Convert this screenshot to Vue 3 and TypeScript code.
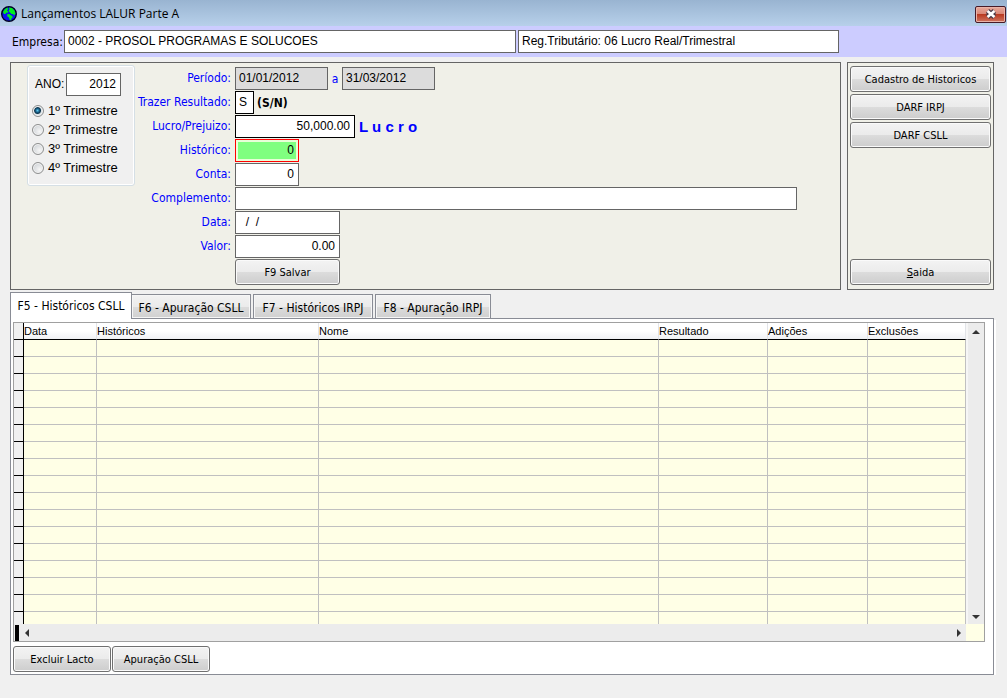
<script setup lang="ts">
import { ref } from 'vue'

interface Column {
  key: string
  title: string
}

const company = ref('0002 - PROSOL PROGRAMAS E SOLUCOES')
const taxRegime = ref('Reg.Tributário: 06 Lucro Real/Trimestral')
const year = ref('2012')
const quarter = ref(1)
const periodStart = ref('01/01/2012')
const periodEnd = ref('31/03/2012')
const fetchResult = ref('S')
const profit = ref('50,000.00')
const history = ref('0')
const account = ref('0')
const complement = ref('')
const entryDate = ref('  /  /')
const amount = ref('0.00')

const quarters = [1, 2, 3, 4]
const tabs = ['F5 - Históricos CSLL', 'F6 - Apuração CSLL', 'F7 - Históricos IRPJ', 'F8 - Apuração IRPJ']
const activeTab = ref(0)

const columns: Column[] = [
  { key: 'data', title: 'Data' },
  { key: 'historicos', title: 'Históricos' },
  { key: 'nome', title: 'Nome' },
  { key: 'resultado', title: 'Resultado' },
  { key: 'adicoes', title: 'Adições' },
  { key: 'exclusoes', title: 'Exclusões' },
]
const rowCount = 17
</script>

<template>
  <div class="window">
    <header class="titlebar">
      <svg class="globe" viewBox="0 0 16 16" aria-hidden="true">
        <circle cx="8" cy="8" r="7.3" fill="#0a14f0" stroke="#000020" stroke-width="1.400" />
        <path d="M2 6L4 3L6.500 1.500L7 3L6 4.500L7.500 6L6 7L5 6.500L4.500 8L3 8Z" fill="#00f01c" />
        <path d="M8 1.500L11 2L13.500 4.500L14.500 7.500L13 9.500L12 8L10.500 8L9 6.500L7.500 5L8.500 3.500Z" fill="#00f01c" />
        <path d="M6 8.500L8 8L10.500 9.500L12 11L10.500 12.500L10 14.500L8.500 13.500L8 11.500L6.500 10.500Z" fill="#00f01c" />
      </svg>
      <h1>Lançamentos LALUR Parte A</h1>
      <button class="close" type="button" aria-label="Fechar">
        <svg viewBox="0 0 12 10" aria-hidden="true">
          <path d="M2.500 2L9.500 8M9.500 2L2.500 8" stroke="#4a3a48" stroke-width="5" />
          <path d="M2.500 2L9.500 8M9.500 2L2.500 8" stroke="#fff" stroke-width="2.600" />
        </svg>
      </button>
    </header>

    <div class="company-bar">
      <label for="company">Empresa:</label>
      <input id="company" v-model="company" class="field company" type="text" />
      <input v-model="taxRegime" class="field regime" type="text" aria-label="Regime tributário" />
    </div>

    <main class="content">
      <div class="top">
        <section class="panel entry">
          <div class="period-box">
            <div class="year">
              <label for="year">ANO:</label>
              <input id="year" v-model="year" class="field num" type="text" />
            </div>
            <label v-for="q in quarters" :key="q" class="quarter">
              <input v-model="quarter" type="radio" name="quarter" :value="q" />
              <span>{{ q }}º Trimestre</span>
            </label>
          </div>

          <form class="form" @submit.prevent>
            <label for="start">Período:</label>
            <div class="cell">
              <input id="start" v-model="periodStart" class="field date" type="text" disabled />
              <label class="until" for="end">a</label>
              <input id="end" v-model="periodEnd" class="field date" type="text" disabled />
            </div>
            <label for="fetch">Trazer Resultado:</label>
            <div class="cell">
              <input id="fetch" v-model="fetchResult" class="field dark flag" type="text" maxlength="1" />
              <b class="hint">(S/N)</b>
            </div>
            <label for="profit">Lucro/Prejuizo:</label>
            <div class="cell">
              <input id="profit" v-model="profit" class="field dark num profit" type="text" />
              <b class="outcome">L u c r o</b>
            </div>
            <label for="history">Histórico:</label>
            <div class="cell"><input id="history" v-model="history" class="field num code current" type="text" /></div>
            <label for="account">Conta:</label>
            <div class="cell"><input id="account" v-model="account" class="field num code" type="text" /></div>
            <label for="complement">Complemento:</label>
            <div class="cell"><input id="complement" v-model="complement" class="field long" type="text" /></div>
            <label for="date">Data:</label>
            <div class="cell"><input id="date" v-model="entryDate" class="field medium" type="text" /></div>
            <label for="amount">Valor:</label>
            <div class="cell"><input id="amount" v-model="amount" class="field num medium" type="text" /></div>
            <button class="btn save" type="submit">F9 Salvar</button>
          </form>
        </section>

        <nav class="panel actions">
          <button class="btn" type="button">Cadastro de Historicos</button>
          <button class="btn" type="button">DARF IRPJ</button>
          <button class="btn" type="button">DARF CSLL</button>
          <button class="btn exit" type="button"><span><u>S</u>aida</span></button>
        </nav>
      </div>

      <div class="tabs" role="tablist">
        <button
          v-for="(tab, i) in tabs"
          :key="tab"
          class="tab"
          :class="{ active: i === activeTab }"
          type="button"
          role="tab"
          :aria-selected="i === activeTab"
          @click="activeTab = i"
        >
          {{ tab }}
        </button>
      </div>

      <section class="page" role="tabpanel">
        <div class="grid">
          <div class="grid-main">
            <table>
              <colgroup>
                <col class="c-mark" />
                <col v-for="c in columns" :key="c.key" :class="'c-' + c.key" />
              </colgroup>
              <thead>
                <tr>
                  <td class="mark"></td>
                  <th v-for="c in columns" :key="c.key" scope="col">{{ c.title }}</th>
                </tr>
              </thead>
              <tbody>
                <tr v-for="r in rowCount" :key="r">
                  <td class="mark"></td>
                  <td v-for="c in columns" :key="c.key"></td>
                </tr>
              </tbody>
            </table>
          </div>
          <div class="scroll-v" aria-hidden="true">
            <svg viewBox="0 0 8 4"><path d="M0 4L4 0L8 4Z" fill="#333" /></svg>
            <svg viewBox="0 0 8 4"><path d="M0 0L4 4L8 0Z" fill="#333" /></svg>
          </div>
          <div class="scroll-h" aria-hidden="true">
            <i class="splitter"></i>
            <svg viewBox="0 0 4 8"><path d="M4 0L0 4L4 8Z" fill="#333" /></svg>
            <svg class="right" viewBox="0 0 4 8"><path d="M0 0L4 4L0 8Z" fill="#333" /></svg>
          </div>
        </div>
        <div class="page-actions">
          <button class="btn" type="button">Excluir Lacto</button>
          <button class="btn" type="button">Apuração CSLL</button>
        </div>
      </section>
    </main>
  </div>
</template>

<style>
body {
  margin: 0;
  background: #f0f0f0;
}
</style>

<style scoped>
.window {
  font: 12px/16px 'DejaVu Sans Condensed', 'DejaVu Sans', sans-serif;
  color: #000;
}
.window *,
.window *::before {
  box-sizing: border-box;
}
.titlebar {
  display: flex;
  align-items: center;
  gap: 4px;
  height: 26px;
  padding: 2px 1px 0;
  background: linear-gradient(#99b4d1, #b7d0ea);
}
.globe {
  width: 16px;
  height: 16px;
}
h1 {
  flex: 1;
  margin: 0;
  font: 12px/16px 'Open Sans', 'Noto Sans', sans-serif;
}
.close {
  display: flex;
  align-items: center;
  justify-content: center;
  width: 31px;
  height: 17px;
  padding: 0;
  border: 1px solid #471a27;
  border-radius: 2px;
  background: linear-gradient(#e7a99c 0%, #d98574 48%, #b93a22 50%, #cf7560 100%);
  box-shadow: inset 0 0 0 1px #e9b3a8;
}
.close svg {
  width: 12px;
  height: 10px;
}
.company-bar {
  display: flex;
  align-items: center;
  gap: 2px;
  height: 31px;
  padding: 0 12px;
  background: #ccccff;
}
.company-bar label {
  width: 50px;
  white-space: nowrap;
}
.field {
  height: 23px;
  min-width: 0;
  margin: 0;
  padding: 0 4px 2px 3px;
  border: 1px solid #656565;
  border-radius: 0;
  outline: 0;
  background: #fff;
  color: #000;
  font: 12px/16px 'Liberation Sans', Arial, sans-serif;
}
.field:disabled {
  background: #dcdcdc;
}
.company {
  flex: 0 1 452px;
}
.regime {
  flex: 0 1 321px;
}
.num {
  text-align: right;
}
.dark {
  border-color: #000;
}
.content {
  padding: 5px 13px 0 10px;
}
.top {
  display: flex;
  gap: 6px;
}
.panel {
  border: 1px solid #656565;
  background: #f0f0e8;
}
.entry {
  display: flex;
  flex: 1;
  align-items: flex-start;
  min-width: 0;
  padding: 2px 16px 4px;
}
.period-box {
  flex: none;
  width: 108px;
  height: 121px;
  padding: 7px 0 0 4px;
  border: 1px solid #d5dfe5;
  border-radius: 3px;
  background: #f0f0f0;
  box-shadow: inset 0 0 0 1px #fff;
  font: 13px/19px 'Liberation Sans', Arial, sans-serif;
}
.year {
  display: flex;
  gap: 3px;
  margin-bottom: 5px;
  padding-left: 3px;
}
.year label {
  width: 28px;
  white-space: nowrap;
  font: 12px/22px 'Liberation Sans', Arial, sans-serif;
}
.year .field {
  width: 55px;
}
.quarter {
  display: flex;
  align-items: center;
  gap: 4px;
  height: 19px;
  white-space: nowrap;
}
.quarter input {
  appearance: none;
  flex: none;
  width: 12px;
  height: 12px;
  margin: 0;
  border: 1px solid #8e8f8f;
  border-radius: 50%;
  background: radial-gradient(circle at 65% 65%, #f6f6f6, #c4c9ce);
  box-shadow: inset 0 0 0 1px #f4f4f4;
}
.quarter input:checked {
  background: radial-gradient(circle at 45% 45%, #5cc8f0 0, #15587e 2px, #10384f 3px, #d8dfe4 4px);
}
.form {
  display: grid;
  flex: 1;
  grid-template-columns: 96px minmax(0, 1fr);
  grid-auto-rows: minmax(23px, auto);
  gap: 1px 4px;
  min-width: 0;
  padding-top: 2px;
}
.form label {
  color: #0000ff;
  line-height: 22px;
  text-align: right;
  white-space: nowrap;
}
.cell {
  display: flex;
  align-items: center;
}
.cell .until {
  width: 14px;
  text-align: center;
}
.date {
  width: 93px;
}
.flag {
  width: 19px;
  padding-right: 0;
}
.hint {
  padding-left: 3px;
}
.profit {
  width: 120px;
}
.outcome {
  padding-left: 4px;
  color: #0000ff;
  font: bold 15px/20px 'Liberation Sans', Arial, sans-serif;
}
.code {
  width: 64px;
}
.current {
  border-color: #f00;
  background: #80ff80;
  box-shadow: inset 0 0 0 2px #e8ffd8;
}
.long {
  flex: 0 1 562px;
}
.medium {
  width: 105px;
}
.btn {
  height: 26px;
  padding: 2px 4px 0;
  border: 1px solid #707070;
  border-radius: 3px;
  background: linear-gradient(#f3f3f3 0%, #ebebeb 50%, #dcdcdc 51%, #cdcdcd 100%);
  box-shadow: inset 0 0 0 1px #fafafa;
  color: #000;
  font: 11px/16px 'DejaVu Sans Condensed', 'DejaVu Sans', sans-serif;
  white-space: nowrap;
}
.save {
  grid-column: 2;
  width: 105px;
}
.actions {
  display: flex;
  flex: none;
  flex-direction: column;
  gap: 2px;
  width: 147px;
  padding: 3px 2px 4px;
}
.exit {
  margin-top: auto;
}
.tabs {
  display: flex;
  align-items: flex-end;
  gap: 2px;
  height: 26px;
  margin-top: 2px;
}
.tab {
  height: 24px;
  width: 120px;
  padding: 2px 0 0;
  border: 1px solid #898c95;
  border-bottom: 0;
  background: linear-gradient(#f2f2f2 0%, #ebebeb 50%, #dcdcdc 51%, #d0d0d0 100%);
  box-shadow: inset 0 0 0 1px #f6f6f6;
  color: #000;
  font: 12px/16px 'DejaVu Sans Condensed', 'DejaVu Sans', sans-serif;
  white-space: nowrap;
}
.tab:last-child {
  width: 116px;
}
.tab.active {
  z-index: 1;
  width: 122px;
  height: 27px;
  margin: 0 -3px -1px 0;
  padding: 0;
  background: #fff;
  box-shadow: none;
}
.page {
  padding: 3px 8px 2px 2px;
  border: 1px solid #898c95;
  background: #fff;
  box-shadow: 2px 2px 0 #fff;
}
.grid {
  display: grid;
  grid-template-columns: minmax(0, 1fr) 18px;
  grid-template-rows: auto 17px;
  border: 1px solid #a0a0a0;
  background: #ffffe6;
}
table {
  width: 100%;
  table-layout: fixed;
  border-collapse: separate;
  border-spacing: 0;
  font: 11px/15px 'Liberation Sans', Arial, sans-serif;
}
.c-mark {
  width: 10px;
}
.c-data {
  width: 73px;
}
.c-historicos {
  width: 222px;
}
.c-resultado {
  width: 109px;
}
.c-adicoes {
  width: 100px;
}
.c-exclusoes {
  width: 98px;
}
th,
td {
  height: 17px;
  padding: 0;
  border: solid #c0c0c0;
  border-width: 0 1px 1px 0;
}
th {
  border-right-color: #e2e4e8;
  background: linear-gradient(#fff 50%, #f0f1f4);
  font-weight: normal;
  text-align: left;
}
thead td,
thead th {
  border-bottom-color: #000;
}
.mark {
  border-color: #000;
  background: #f0f0f0;
}
tbody tr:last-child td {
  height: 12px;
  border-bottom: 0;
}
.scroll-v {
  display: flex;
  flex-direction: column;
  align-items: center;
  justify-content: space-between;
  padding: 7px 0 5px;
  border-left: 2px solid #f6f6f6;
  background: #ececec;
}
.scroll-v svg {
  width: 8px;
  height: 4px;
}
.scroll-h {
  display: flex;
  align-items: center;
  gap: 6px;
  padding: 0 5px 0 1px;
  background: #ececec;
}
.scroll-h svg {
  width: 4px;
  height: 8px;
}
.scroll-h .right {
  margin-left: auto;
}
.splitter {
  width: 4px;
  height: 16px;
  background: #000;
}
.page-actions {
  display: flex;
  gap: 1px;
  padding-top: 4px;
}
.page-actions .btn {
  width: 98px;
}
</style>
